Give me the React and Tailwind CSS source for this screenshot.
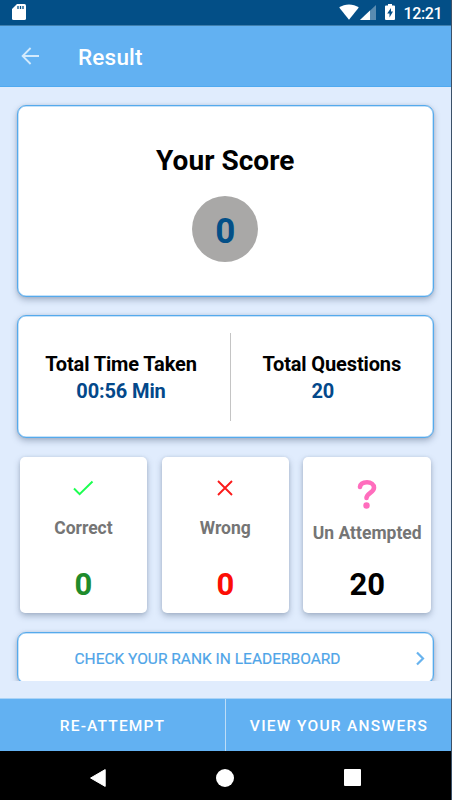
const card = "shrink-0 rounded-[9px] border border-[#55aaec] bg-white shadow-[inset_0_0_0_0.5px_#8cc6f5,0_3px_6px_rgba(60,80,110,0.36),0_0_3px_rgba(60,80,110,0.14)]";

function StatusBar() {
  return (
    <div className="flex h-[26px] shrink-0 items-start border-b border-[#3f7fae] bg-[#034f87] text-white">
      <svg className="ml-3 mt-1 block" width="14" height="16" viewBox="0 0 14 16">
        <path fill="#fff" d="M5 0h7.4Q14 0 14 1.6v12.8q0 1.6-1.6 1.6H1.6Q0 16 0 14.4V5z" />
        <path stroke="#034f87" strokeWidth="1.3" d="M6 2v3M8.5 2v3M11 2v3" />
      </svg>
      <svg className="ml-[313px] mt-1 block" width="20" height="16" viewBox="0 0 20 16">
        <path fill="#fff" d="M.2 3.6C5.7-.7 14.3-.7 19.8 3.6L10 15.8z" />
      </svg>
      <svg className="ml-[1px] mt-[5px] block" width="16" height="15" viewBox="0 0 16 15">
        <path fill="#fff" fillOpacity=".35" d="M16 0v15H0z" />
        <path fill="#fff" d="M10 5.6V15H0z" />
      </svg>
      <svg className="ml-[9px] mt-1 block" width="10" height="16" viewBox="0 0 10 16">
        <path fill="#fff" d="M3 0h4v1.6h2q1 0 1 1V15q0 1-1 1H1q-1 0-1-1V2.6q0-1 1-1h2z" />
        <path fill="#034f87" d="M6 4v3.6h2L4.5 13.5V9.4H2.2z" />
      </svg>
      <span className="ml-[8.5px] mt-[4px] text-[16px] leading-5 font-medium tracking-[-0.4px]">12:21</span>
    </div>
  );
}

function StatCard({ icon, label, value, color, offset }) {
  return (
    <div className="flex h-[156px] w-[127.5px] flex-col items-center rounded-[5px] bg-white shadow-[0_3px_6px_rgba(60,80,110,0.36),0_0_3px_rgba(60,80,110,0.12)]">
      <div className={offset ? "flex h-[66px] pt-[22px]" : "flex h-[61px] pt-[20px]"}>{icon}</div>
      <div className="h-5 text-[17.5px] leading-5 font-bold whitespace-nowrap text-[#757575]">{label}</div>
      <div className={(offset ? "mt-[24px] " : "mt-[29px] ") + "text-[31px] leading-[36px] font-bold " + color}>{value}</div>
    </div>
  );
}

export default function App() {
  return (
    <div className="flex h-[800px] w-[452px] flex-col overflow-hidden border-r border-[#3c5168] bg-[#e0ecfd] font-['Roboto',sans-serif]">
      <StatusBar />
      <header className="flex h-[61px] shrink-0 items-center border-b border-[#50aaf0] bg-[#62b1f2] text-white">
        <svg className="ml-[21px] block" width="19" height="18" viewBox="0 0 19 18" fill="none" stroke="#d3eafc" strokeWidth="1.8">
          <path d="M18 9H1.6M9.6 1L1.6 9l8 8" />
        </svg>
        <h1 className="ml-[38px] pt-[2px] text-[22.5px] leading-7 font-medium tracking-[0.2px]">Result</h1>
      </header>

      <main className="flex h-[594px] shrink-0 flex-col overflow-hidden px-[17px] pt-[18px]">
        <section className={card + " flex h-[192px] w-[416.5px] flex-col items-center"}>
          <h2 className="mt-[38px] text-[28px] leading-[34px] font-bold tracking-[0.05px] text-black">Your Score</h2>
          <div className="mt-[18px] flex size-[66px] items-center justify-center rounded-full bg-[#a9a8a7] pt-[4px] text-[35px] leading-none font-bold text-[#034f87]">0</div>
        </section>

        <section className={card + " mt-[18px] flex h-[123px] w-[416.5px] items-start pt-[17px] text-center text-[20px] leading-[26.5px] font-bold tracking-[-0.13px]"}>
          <div className="w-[206px] pt-[18px]">
            <div className="text-black">Total Time Taken</div>
            <div className="text-[#03488a]">00:56 Min</div>
          </div>
          <div className="ml-[5.5px] h-[88px] w-[1.5px] bg-[#c4c4c4]" />
          <div className="flex-1 pt-[18px]">
            <div className="text-black">Total Questions</div>
            <div className="pr-[18px] text-[#03488a]">20</div>
          </div>
        </section>

        <section className="mt-[19px] flex h-[156px] shrink-0 gap-[14.4px] pl-[2.7px]">
          <StatCard
            label="Correct"
            value="0"
            color="text-[#1f8b2c]"
            icon={
              <svg className="block" width="22" height="22" viewBox="0 0 22 22" fill="none" stroke="#1cff50" strokeWidth="2">
                <path d="M2 11.5l5.6 5.6L20.5 4.5" />
              </svg>
            }
          />
          <StatCard
            label="Wrong"
            value="0"
            color="text-[#fc0d05]"
            icon={
              <svg className="block" width="22" height="22" viewBox="0 0 22 22" fill="none" stroke="#fb1b1b" strokeWidth="1.9">
                <path d="M4 4l14 14M18 4L4 18" />
              </svg>
            }
          />
          <StatCard
            offset
            label="Un Attempted"
            value="20"
            color="text-black"
            icon={
              <svg className="block" width="20" height="30" viewBox="0 0 20 30" fill="none">
                <path stroke="#ff6dbd" strokeWidth="4.6" strokeLinecap="round" d="M3 8C3.5 4.5 6.500 3.300 10 3.300c4 0 7 2 7 5.500 0 4.700-7.500 5.500-7.500 10.200" />
                <circle cx="9.5" cy="26.5" r="3.2" fill="#ff6dbd" />
              </svg>
            }
          />
        </section>

        <section className={card + " mt-[19px] flex h-[52px] w-[416.5px] items-center"}>
          <span className="ml-[56.5px] pt-[2px] text-[15.5px] leading-5 whitespace-nowrap text-[#4fa5e8] [-webkit-text-stroke:0.2px_#4fa5e8]">CHECK YOUR RANK IN LEADERBOARD</span>
          <svg className="mr-[8px] ml-auto block" width="10" height="15" viewBox="0 0 10 15" fill="none" stroke="#68b3ee" strokeWidth="2.2">
            <path d="M2 1.5l6 6-6 6" />
          </svg>
        </section>
      </main>

      <div className="mt-[17px] flex h-[53px] shrink-0 border-t border-[#a9d3f7] bg-[#62b1f2] text-[15.5px] font-medium text-white">
        <button className="w-[225px] pt-[3px] tracking-[1.15px]">RE-ATTEMPT</button>
        <button className="flex-1 border-l border-[#bdddf7] pt-[3px] pl-[1px] tracking-[1.28px] whitespace-nowrap">VIEW YOUR ANSWERS</button>
      </div>

      <nav className="-mr-px flex h-[49px] shrink-0 items-center bg-black pt-[4px]">
        <svg className="ml-[90px] block" width="16" height="18" viewBox="0 0 16 18">
          <path fill="#fff" stroke="#fff" strokeLinejoin="round" d="M15.2 .6v16.8L.6 9z" />
        </svg>
        <div className="ml-[110px] size-[18px] rounded-full bg-white" />
        <div className="ml-[110px] size-[17px] rounded-[1px] bg-white" />
      </nav>
    </div>
  );
}
